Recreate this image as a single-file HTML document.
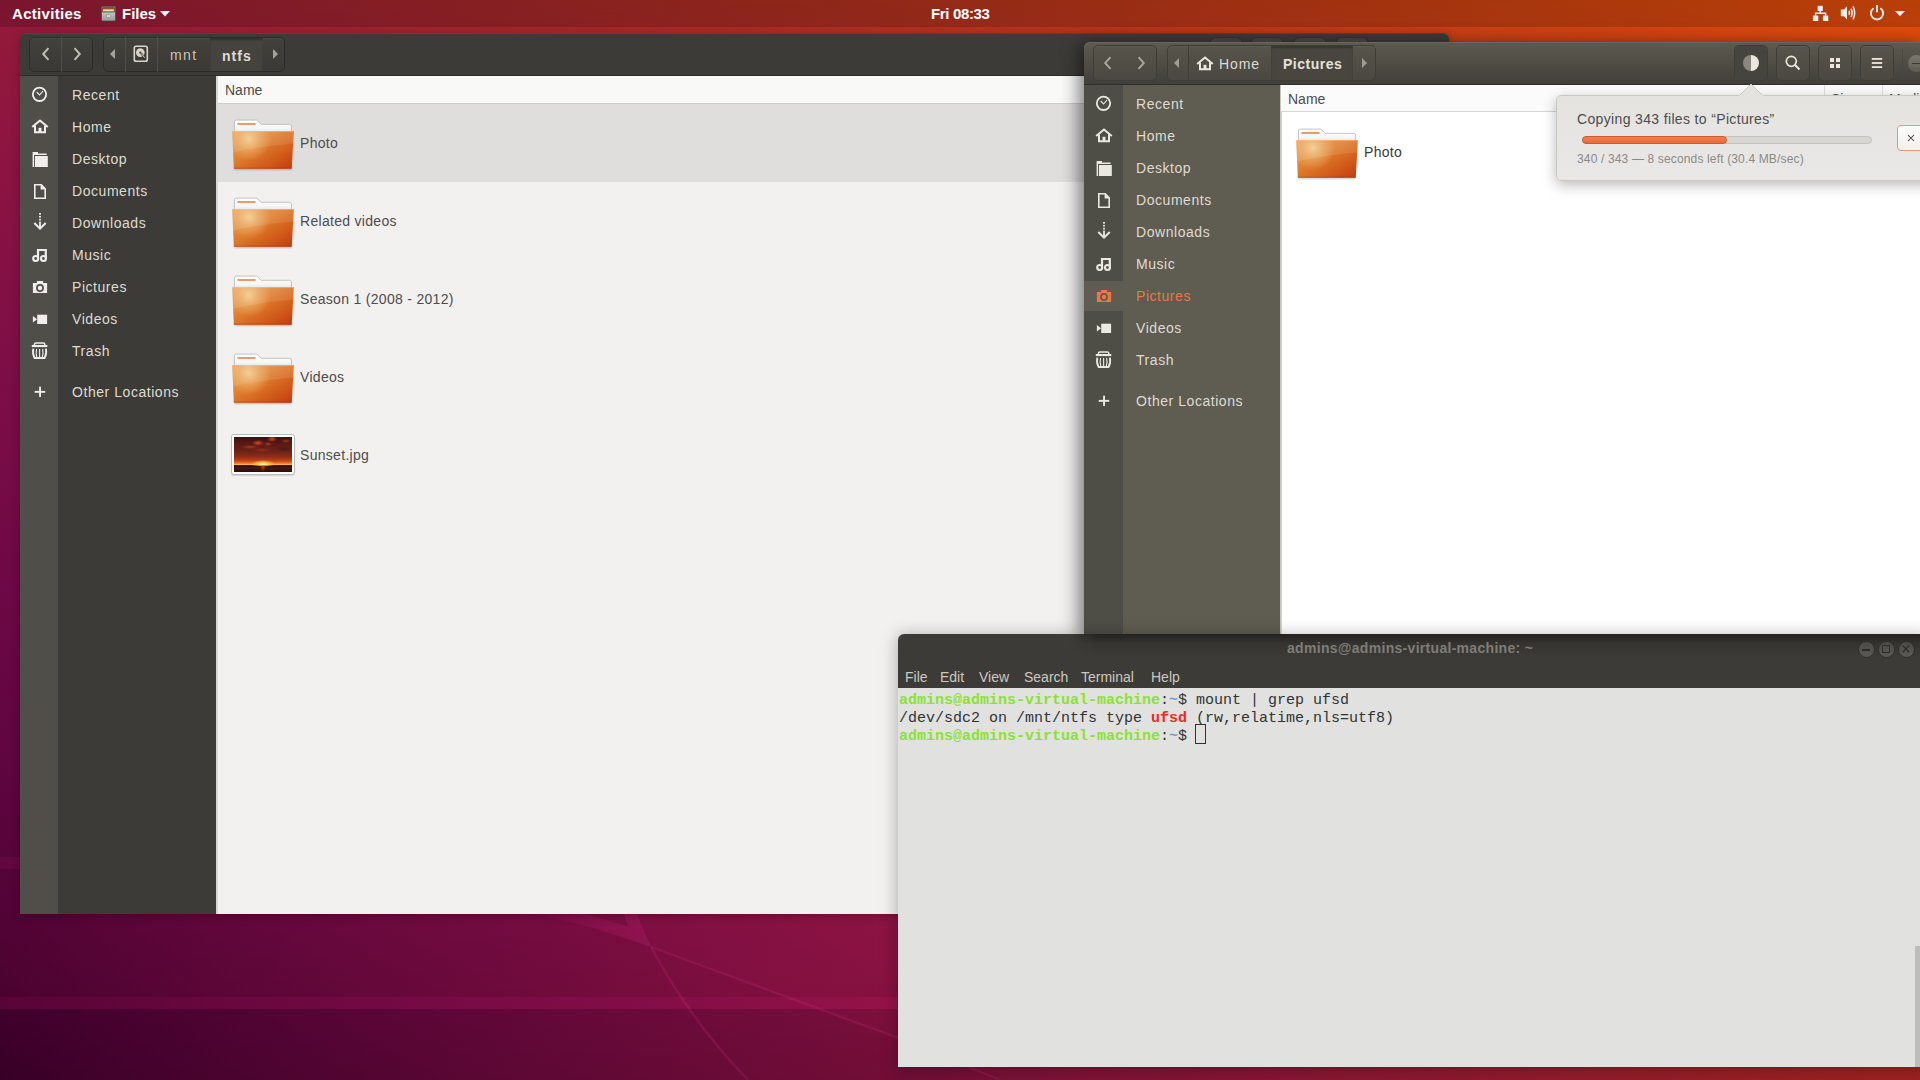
<!DOCTYPE html>
<html><head><meta charset="utf-8">
<style>
*{margin:0;padding:0;box-sizing:border-box}
html,body{width:1920px;height:1080px;overflow:hidden}
body{position:relative;font-family:"Liberation Sans",sans-serif;font-size:14px;color:#4c4c4c;background:#6a0c40}
.a{position:absolute}
.lbl{position:absolute;white-space:nowrap;line-height:17px;font-size:14px}
.btng{border:1px solid #2c2b28;border-radius:5px;background:linear-gradient(#42413c,#3a3935);box-shadow:inset 0 1px 0 rgba(255,255,255,0.05)}
.btng2{border:1px solid #3f3d37;border-radius:5px;background:linear-gradient(#57544b,#4a4841);box-shadow:inset 0 1px 0 rgba(255,255,255,0.05)}
.term{position:absolute;font-family:"Liberation Mono",monospace;font-size:15px;line-height:18px;white-space:pre;color:#2e3436}
</style></head><body>

<svg width="0" height="0" style="position:absolute"><defs>
<linearGradient id="fb" x1="0" y1="0" x2="1" y2="1"><stop offset="0" stop-color="#eca258"/><stop offset="0.4" stop-color="#e08030"/><stop offset="0.75" stop-color="#d05818"/><stop offset="1" stop-color="#c23a0e"/></linearGradient>
<radialGradient id="fh" cx="21" cy="25" r="22" gradientUnits="userSpaceOnUse"><stop offset="0" stop-color="#f3cf8f" stop-opacity="0.95"/><stop offset="0.5" stop-color="#eebb78" stop-opacity="0.5"/><stop offset="1" stop-color="#eebb78" stop-opacity="0"/></radialGradient>
<linearGradient id="fp" x1="0" y1="0" x2="0" y2="1"><stop offset="0" stop-color="#ffffff"/><stop offset="0.6" stop-color="#f6f6f6"/><stop offset="1" stop-color="#d7dde0"/></linearGradient>
<filter id="fsh" x="-20%" y="-20%" width="140%" height="140%"><feGaussianBlur stdDeviation="0.8"/></filter>
<symbol id="folder" viewBox="0 0 72 60">
 <rect x="6" y="52.5" width="58" height="3.5" rx="1.5" fill="#000" opacity="0.22" filter="url(#fsh)"/>
 <path d="M6.4 8 Q6.4 6.1 8.3 6.1 L28.8 6.1 L33.2 10.3 L61.6 10.3 Q63.5 10.3 63.5 12.2 L63.5 20 L6.4 20 Z" fill="url(#fp)" stroke="#b4b6b6" stroke-width="0.8"/>
 <rect x="9.2" y="9.1" width="18.6" height="1.8" rx="0.9" fill="#ee9a68"/>
 <path d="M4.2 17.6 Q4.2 16.9 5 16.9 L65 16.9 Q65.8 16.9 65.8 17.6 L63.8 53.9 Q63.7 54.7 62.9 54.7 L6.7 54.7 Q5.9 54.7 5.8 53.9 Z" fill="url(#fb)"/>
 <path d="M4.2 17.6 Q4.2 16.9 5 16.9 L65 16.9 Q65.8 16.9 65.8 17.6 L63.8 53.9 Q63.7 54.7 62.9 54.7 L6.7 54.7 Q5.9 54.7 5.8 53.9 Z" fill="url(#fh)"/>
 <path d="M4.3 17 L65.7 17 L65.1 29.5 Q35 32 5 38.5 Z" fill="#fff" opacity="0.10"/>
 <path d="M5 17.6 L65 17.6" stroke="#f7c296" stroke-width="0.8" opacity="0.7"/>
 <path d="M5.8 54.2 L63.8 54.2" stroke="#a8300c" stroke-width="0.8" opacity="0.6"/>
</symbol>
</defs></svg>
<div class="a" style="left:0;top:0;width:1920px;height:1080px;background:#6a0c40"></div>
<div class="a" style="left:0px;top:0px;width:1920px;height:3px;background:linear-gradient(to right,#951a39 0px,#991e33 160px,#9d222e 320px,#a22629 480px,#a72a24 640px,#ac2f20 800px,#b2331c 960px,#b93718 1120px,#bf3b14 1280px,#c73f11 1440px,#cf440e 1600px,#d7480c 1760px,#df4d09 1920px)"></div>
<div class="a" style="left:0px;top:3px;width:1920px;height:3px;background:linear-gradient(to right,#951a39 0px,#991e33 160px,#9d222e 320px,#a22629 480px,#a72a25 640px,#ac2e20 800px,#b2331c 960px,#b93718 1120px,#bf3b15 1280px,#c73f12 1440px,#cf440f 1600px,#d7480c 1760px,#df4c0a 1920px)"></div>
<div class="a" style="left:0px;top:6px;width:1920px;height:3px;background:linear-gradient(to right,#951a39 0px,#981e34 160px,#9d222e 320px,#a1262a 480px,#a72a25 640px,#ac2e20 800px,#b2321c 960px,#b93719 1120px,#c03b15 1280px,#c73f12 1440px,#cf440f 1600px,#d7480c 1760px,#df4c0a 1920px)"></div>
<div class="a" style="left:0px;top:9px;width:1920px;height:3px;background:linear-gradient(to right,#941a39 0px,#981e34 160px,#9d222f 320px,#a1262a 480px,#a72a25 640px,#ac2e21 800px,#b2321d 960px,#b93619 1120px,#c03b16 1280px,#c73f12 1440px,#cf430f 1600px,#d7480d 1760px,#df4c0b 1920px)"></div>
<div class="a" style="left:0px;top:12px;width:1920px;height:3px;background:linear-gradient(to right,#941a3a 0px,#981e34 160px,#9c222f 320px,#a1262a 480px,#a62a25 640px,#ac2e21 800px,#b2321d 960px,#b93619 1120px,#c03b16 1280px,#c73f13 1440px,#cf4310 1600px,#d7480d 1760px,#df4c0b 1920px)"></div>
<div class="a" style="left:0px;top:15px;width:1920px;height:3px;background:linear-gradient(to right,#941a3a 0px,#981e34 160px,#9c222f 320px,#a1262a 480px,#a62a26 640px,#ac2e22 800px,#b2321e 960px,#b9361a 1120px,#c03a16 1280px,#c73f13 1440px,#cf4310 1600px,#d7470e 1760px,#e04c0b 1920px)"></div>
<div class="a" style="left:0px;top:18px;width:1920px;height:3px;background:linear-gradient(to right,#94193a 0px,#981d35 160px,#9c2130 320px,#a1252b 480px,#a62a26 640px,#ac2e22 800px,#b2321e 960px,#b9361a 1120px,#c03a17 1280px,#c73f14 1440px,#cf4311 1600px,#d7470e 1760px,#e04c0c 1920px)"></div>
<div class="a" style="left:0px;top:21px;width:1920px;height:3px;background:linear-gradient(to right,#94193a 0px,#981d35 160px,#9c2130 320px,#a1252b 480px,#a62926 640px,#ac2e22 800px,#b2321e 960px,#b9361b 1120px,#c03a17 1280px,#c73e14 1440px,#cf4311 1600px,#d7470f 1760px,#e04c0c 1920px)"></div>
<div class="a" style="left:0px;top:24px;width:1920px;height:3px;background:linear-gradient(to right,#93193a 0px,#981d35 160px,#9c2130 320px,#a1252b 480px,#a62927 640px,#ac2d23 800px,#b2321f 960px,#b9361b 1120px,#c03a18 1280px,#c73e14 1440px,#cf4311 1600px,#d7470f 1760px,#e04b0d 1920px)"></div>
<div class="a" style="left:0px;top:27px;width:1920px;height:3px;background:linear-gradient(to right,#93193b 0px,#971d35 160px,#9c2130 320px,#a1252c 480px,#a62927 640px,#ac2d23 800px,#b2311f 960px,#b9361b 1120px,#c03a18 1280px,#c73e15 1440px,#cf4212 1600px,#d7470f 1760px,#e04b0d 1920px)"></div>
<div class="a" style="left:0px;top:30px;width:1920px;height:3px;background:linear-gradient(to right,#93193b 0px,#971d36 160px,#9c2131 320px,#a1252c 480px,#a62927 640px,#ac2d23 800px,#b2311f 960px,#b9351c 1120px,#c03a18 1280px,#c73e15 1440px,#cf4212 1600px,#d74710 1760px,#e04b0d 1920px)"></div>
<div class="a" style="left:0px;top:33px;width:1920px;height:3px;background:linear-gradient(to right,#93193b 0px,#971d36 160px,#9c2131 320px,#a1252c 480px,#a62928 640px,#ac2d24 800px,#b23120 960px,#b9351c 1120px,#c03a19 1280px,#c73e16 1440px,#cf4213 1600px,#d74710 1760px,#e04b0e 1920px)"></div>
<div class="a" style="left:0px;top:36px;width:1920px;height:3px;background:linear-gradient(to right,#93193b 0px,#971d36 160px,#9c2131 320px,#a1252c 480px,#a62928 640px,#ac2d24 800px,#b23120 960px,#b9351c 1120px,#c03919 1280px,#c73e16 1440px,#cf4213 1600px,#d74610 1760px,#e04b0e 1920px)"></div>
<div class="a" style="left:0px;top:39px;width:1920px;height:3px;background:linear-gradient(to right,#93193b 0px,#971d36 160px,#9b2131 320px,#a0252d 480px,#a62928 640px,#ac2d24 800px,#b23120 960px,#b9351d 1120px,#c03919 1280px,#c73e16 1440px,#cf4213 1600px,#d74611 1760px,#e04b0f 1920px)"></div>
<div class="a" style="left:0;top:42px;width:20px;height:873px;background:linear-gradient(to bottom,#93193b 0px,#91183c 24px,#90173e 48px,#8e163f 72px,#8d1540 96px,#8b1441 120px,#8a1342 144px,#881343 168px,#861244 192px,#851144 216px,#831045 240px,#811045 264px,#800f46 288px,#7e0e46 312px,#7c0d46 336px,#7b0d47 360px,#790c47 384px,#770c47 408px,#750b47 432px,#740a46 456px,#720a46 480px,#700946 504px,#6e0945 528px,#6c0845 552px,#6b0844 576px,#690744 600px,#670743 624px,#650642 648px,#630641 672px,#610640 696px,#5f053f 720px,#5d053e 744px,#5b043d 768px,#59043b 792px,#57043a 816px,#550438 840px,#530337 864px)"></div>
<div class="a" style="left:0;top:857px;width:20px;height:12px;background:rgba(255,60,150,0.07)"></div>
<div class="a" style="left:0px;top:912px;width:1920px;height:4px;background:linear-gradient(to right,#520336 0px,#5d063a 160px,#68083d 320px,#720b40 480px,#7c0e41 640px,#851142 800px,#8e1441 960px,#961740 1120px,#9e1a3d 1280px,#a51e3a 1440px,#ac2135 1600px,#b22530 1760px,#b8292a 1920px)"></div>
<div class="a" style="left:0px;top:916px;width:1920px;height:4px;background:linear-gradient(to right,#510335 0px,#5d063a 160px,#67083d 320px,#720b40 480px,#7b0e41 640px,#851141 800px,#8e1441 960px,#96173f 1120px,#9e1a3d 1280px,#a51e3a 1440px,#ac2135 1600px,#b22530 1760px,#b8292a 1920px)"></div>
<div class="a" style="left:0px;top:920px;width:1920px;height:4px;background:linear-gradient(to right,#510335 0px,#5c053a 160px,#67083d 320px,#710b3f 480px,#7b0e41 640px,#841141 800px,#8d1441 960px,#95173f 1120px,#9d1a3d 1280px,#a41e39 1440px,#ab2135 1600px,#b12530 1760px,#b72929 1920px)"></div>
<div class="a" style="left:0px;top:924px;width:1920px;height:4px;background:linear-gradient(to right,#510335 0px,#5c0539 160px,#67083d 320px,#710b3f 480px,#7b0e41 640px,#841141 800px,#8d1441 960px,#95173f 1120px,#9d1a3d 1280px,#a41e39 1440px,#ab2135 1600px,#b1252f 1760px,#b72929 1920px)"></div>
<div class="a" style="left:0px;top:928px;width:1920px;height:4px;background:linear-gradient(to right,#500335 0px,#5c0539 160px,#67083c 320px,#710b3f 480px,#7b0d40 640px,#841041 800px,#8d1440 960px,#95173f 1120px,#9d1a3c 1280px,#a41e39 1440px,#ab2135 1600px,#b1252f 1760px,#b62929 1920px)"></div>
<div class="a" style="left:0px;top:932px;width:1920px;height:4px;background:linear-gradient(to right,#500334 0px,#5b0539 160px,#66083c 320px,#710b3f 480px,#7a0d40 640px,#841041 800px,#8c1340 960px,#95173f 1120px,#9c1a3c 1280px,#a41d39 1440px,#aa2134 1600px,#b0252f 1760px,#b62929 1920px)"></div>
<div class="a" style="left:0px;top:936px;width:1920px;height:4px;background:linear-gradient(to right,#500334 0px,#5b0539 160px,#66083c 320px,#700b3e 480px,#7a0d40 640px,#831040 800px,#8c1340 960px,#94173f 1120px,#9c1a3c 1280px,#a31d39 1440px,#aa2134 1600px,#b0252f 1760px,#b62828 1920px)"></div>
<div class="a" style="left:0px;top:940px;width:1920px;height:4px;background:linear-gradient(to right,#4f0334 0px,#5b0538 160px,#66083c 320px,#700a3e 480px,#7a0d40 640px,#831040 800px,#8c1340 960px,#94163e 1120px,#9c1a3c 1280px,#a31d38 1440px,#a92134 1600px,#b0252e 1760px,#b52828 1920px)"></div>
<div class="a" style="left:0px;top:944px;width:1920px;height:4px;background:linear-gradient(to right,#4f0333 0px,#5a0538 160px,#65083c 320px,#700a3e 480px,#790d40 640px,#831040 800px,#8b1340 960px,#94163e 1120px,#9b1a3c 1280px,#a31d38 1440px,#a92134 1600px,#af242e 1760px,#b52828 1920px)"></div>
<div class="a" style="left:0px;top:948px;width:1920px;height:4px;background:linear-gradient(to right,#4f0333 0px,#5a0538 160px,#65083b 320px,#6f0a3e 480px,#790d3f 640px,#821040 800px,#8b133f 960px,#93163e 1120px,#9b1a3b 1280px,#a21d38 1440px,#a92133 1600px,#af242e 1760px,#b42827 1920px)"></div>
<div class="a" style="left:0px;top:952px;width:1920px;height:4px;background:linear-gradient(to right,#4e0333 0px,#5a0537 160px,#65083b 320px,#6f0a3e 480px,#790d3f 640px,#821040 800px,#8b133f 960px,#93163e 1120px,#9b1a3b 1280px,#a21d38 1440px,#a82133 1600px,#ae242e 1760px,#b42827 1920px)"></div>
<div class="a" style="left:0px;top:956px;width:1920px;height:4px;background:linear-gradient(to right,#4e0333 0px,#590537 160px,#64083b 320px,#6f0a3d 480px,#790d3f 640px,#821040 800px,#8b133f 960px,#93163e 1120px,#9a193b 1280px,#a11d38 1440px,#a82033 1600px,#ae242d 1760px,#b42827 1920px)"></div>
<div class="a" style="left:0px;top:960px;width:1920px;height:4px;background:linear-gradient(to right,#4e0332 0px,#590537 160px,#64083b 320px,#6e0a3d 480px,#780d3f 640px,#81103f 800px,#8a133f 960px,#92163d 1120px,#9a193b 1280px,#a11d37 1440px,#a82033 1600px,#ae242d 1760px,#b32827 1920px)"></div>
<div class="a" style="left:0px;top:964px;width:1920px;height:4px;background:linear-gradient(to right,#4d0332 0px,#590537 160px,#64083a 320px,#6e0a3d 480px,#780d3f 640px,#81103f 800px,#8a133f 960px,#92163d 1120px,#9a193b 1280px,#a11d37 1440px,#a72032 1600px,#ad242d 1760px,#b32826 1920px)"></div>
<div class="a" style="left:0px;top:968px;width:1920px;height:4px;background:linear-gradient(to right,#4d0332 0px,#580536 160px,#63073a 320px,#6e0a3d 480px,#780d3e 640px,#81103f 800px,#8a133e 960px,#92163d 1120px,#99193a 1280px,#a01d37 1440px,#a72032 1600px,#ad242d 1760px,#b22826 1920px)"></div>
<div class="a" style="left:0px;top:972px;width:1920px;height:4px;background:linear-gradient(to right,#4d0331 0px,#580536 160px,#63073a 320px,#6d0a3c 480px,#770d3e 640px,#81103f 800px,#89133e 960px,#91163d 1120px,#99193a 1280px,#a01d37 1440px,#a72032 1600px,#ad242c 1760px,#b22826 1920px)"></div>
<div class="a" style="left:0px;top:976px;width:1920px;height:4px;background:linear-gradient(to right,#4c0331 0px,#580536 160px,#630739 320px,#6d0a3c 480px,#770d3e 640px,#80103e 800px,#89133e 960px,#91163d 1120px,#99193a 1280px,#a01c36 1440px,#a62032 1600px,#ac242c 1760px,#b22725 1920px)"></div>
<div class="a" style="left:0px;top:980px;width:1920px;height:4px;background:linear-gradient(to right,#4c0331 0px,#570535 160px,#620739 320px,#6d0a3c 480px,#770d3e 640px,#80103e 800px,#89133e 960px,#91163c 1120px,#98193a 1280px,#9f1c36 1440px,#a62031 1600px,#ac242c 1760px,#b12725 1920px)"></div>
<div class="a" style="left:0px;top:984px;width:1920px;height:4px;background:linear-gradient(to right,#4c0230 0px,#570535 160px,#620739 320px,#6d0a3c 480px,#760d3d 640px,#800f3e 800px,#88123e 960px,#90163c 1120px,#98193a 1280px,#9f1c36 1440px,#a52031 1600px,#ab232b 1760px,#b12725 1920px)"></div>
<div class="a" style="left:0px;top:988px;width:1920px;height:4px;background:linear-gradient(to right,#4b0230 0px,#570535 160px,#620739 320px,#6c0a3b 480px,#760d3d 640px,#7f0f3e 800px,#88123d 960px,#90163c 1120px,#981939 1280px,#9f1c36 1440px,#a52031 1600px,#ab232b 1760px,#b02724 1920px)"></div>
<div class="a" style="left:0px;top:992px;width:1920px;height:4px;background:linear-gradient(to right,#4b0230 0px,#560535 160px,#610738 320px,#6c0a3b 480px,#760d3d 640px,#7f0f3e 800px,#88123d 960px,#90153c 1120px,#971939 1280px,#9e1c35 1440px,#a52031 1600px,#ab232b 1760px,#b02724 1920px)"></div>
<div class="a" style="left:0px;top:996px;width:1920px;height:1px;background:linear-gradient(to right,#4b022f 0px,#560534 160px,#610738 320px,#6c0a3b 480px,#760c3d 640px,#7f0f3d 800px,#88123d 960px,#90153b 1120px,#971939 1280px,#9e1c35 1440px,#a52031 1600px,#aa232b 1760px,#b02724 1920px)"></div>
<div class="a" style="left:0px;top:997px;width:1920px;height:12px;background:linear-gradient(to right,#580339 0px,#64063e 160px,#6f0842 320px,#790b45 480px,#830d46 640px,#8c1047 800px,#951347 960px,#9d1645 1120px,#a51a42 1280px,#ac1d3f 1440px,#b2203a 1600px,#b82434 1760px,#bd282d 1920px)"></div>
<div class="a" style="left:0px;top:1009px;width:1920px;height:4px;background:linear-gradient(to right,#3f002d 0px,#4a0232 160px,#550536 320px,#600739 480px,#6a0a3a 640px,#730d3b 800px,#7c103b 960px,#841339 1120px,#8b1636 1280px,#921a33 1440px,#981d2e 1600px,#9e2128 1760px,#a32421 1920px)"></div>
<div class="a" style="left:0px;top:1013px;width:1920px;height:4px;background:linear-gradient(to right,#3e002c 0px,#4a0231 160px,#550535 320px,#600738 480px,#690a3a 640px,#730d3b 800px,#7b103a 960px,#831339 1120px,#8b1636 1280px,#921932 1440px,#981d2e 1600px,#9e2128 1760px,#a32421 1920px)"></div>
<div class="a" style="left:0px;top:1017px;width:1920px;height:4px;background:linear-gradient(to right,#3e002c 0px,#4a0231 160px,#550535 320px,#5f0738 480px,#690a3a 640px,#720d3a 800px,#7b103a 960px,#831339 1120px,#8b1636 1280px,#911932 1440px,#981d2d 1600px,#9d2127 1760px,#a22420 1920px)"></div>
<div class="a" style="left:0px;top:1021px;width:1920px;height:4px;background:linear-gradient(to right,#3e002c 0px,#490231 160px,#540535 320px,#5f0738 480px,#690a3a 640px,#720d3a 800px,#7b103a 960px,#831338 1120px,#8a1636 1280px,#911932 1440px,#971d2d 1600px,#9d2027 1760px,#a22420 1920px)"></div>
<div class="a" style="left:0px;top:1025px;width:1920px;height:4px;background:linear-gradient(to right,#3d002b 0px,#490230 160px,#540534 320px,#5f0737 480px,#680a39 640px,#720d3a 800px,#7a103a 960px,#821338 1120px,#8a1635 1280px,#911932 1440px,#971d2d 1600px,#9c2027 1760px,#a12420 1920px)"></div>
<div class="a" style="left:0px;top:1029px;width:1920px;height:4px;background:linear-gradient(to right,#3d002b 0px,#490230 160px,#540534 320px,#5e0737 480px,#680a39 640px,#710d3a 800px,#7a1039 960px,#821338 1120px,#891635 1280px,#901931 1440px,#961d2c 1600px,#9c2026 1760px,#a1241f 1920px)"></div>
<div class="a" style="left:0px;top:1033px;width:1920px;height:4px;background:linear-gradient(to right,#3d002b 0px,#480230 160px,#530534 320px,#5e0737 480px,#680a39 640px,#710d39 800px,#7a0f39 960px,#821337 1120px,#891635 1280px,#901931 1440px,#961d2c 1600px,#9c2026 1760px,#a1241f 1920px)"></div>
<div class="a" style="left:0px;top:1037px;width:1920px;height:4px;background:linear-gradient(to right,#3c002a 0px,#48022f 160px,#530534 320px,#5e0737 480px,#670a38 640px,#710c39 800px,#790f39 960px,#811237 1120px,#891635 1280px,#901931 1440px,#961c2c 1600px,#9b2026 1760px,#a0241f 1920px)"></div>
<div class="a" style="left:0px;top:1041px;width:1920px;height:4px;background:linear-gradient(to right,#3c002a 0px,#48022f 160px,#530433 320px,#5d0736 480px,#670a38 640px,#700c39 800px,#790f39 960px,#811237 1120px,#881634 1280px,#8f1930 1440px,#951c2c 1600px,#9b2025 1760px,#a0241e 1920px)"></div>
<div class="a" style="left:0px;top:1045px;width:1920px;height:4px;background:linear-gradient(to right,#3b002a 0px,#47022f 160px,#520433 320px,#5d0736 480px,#670a38 640px,#700c39 800px,#790f38 960px,#811237 1120px,#881634 1280px,#8f1930 1440px,#951c2b 1600px,#9a2025 1760px,#9f241e 1920px)"></div>
<div class="a" style="left:0px;top:1049px;width:1920px;height:4px;background:linear-gradient(to right,#3b0029 0px,#47022e 160px,#520433 320px,#5d0736 480px,#660a38 640px,#700c38 800px,#780f38 960px,#801236 1120px,#881534 1280px,#8e1930 1440px,#951c2b 1600px,#9a2025 1760px,#9f241d 1920px)"></div>
<div class="a" style="left:0px;top:1053px;width:1920px;height:4px;background:linear-gradient(to right,#3b0029 0px,#47022e 160px,#520432 320px,#5c0735 480px,#660937 640px,#6f0c38 800px,#780f38 960px,#801236 1120px,#871533 1280px,#8e1930 1440px,#941c2b 1600px,#9a2024 1760px,#9e231d 1920px)"></div>
<div class="a" style="left:0px;top:1057px;width:1920px;height:4px;background:linear-gradient(to right,#3a0028 0px,#46022e 160px,#510432 320px,#5c0735 480px,#660937 640px,#6f0c38 800px,#780f37 960px,#801236 1120px,#871533 1280px,#8e192f 1440px,#941c2a 1600px,#992024 1760px,#9e231d 1920px)"></div>
<div class="a" style="left:0px;top:1061px;width:1920px;height:4px;background:linear-gradient(to right,#3a0028 0px,#46022d 160px,#510432 320px,#5c0735 480px,#660937 640px,#6f0c38 800px,#770f37 960px,#7f1236 1120px,#871533 1280px,#8d192f 1440px,#931c2a 1600px,#992024 1760px,#9d231c 1920px)"></div>
<div class="a" style="left:0px;top:1065px;width:1920px;height:4px;background:linear-gradient(to right,#3a0028 0px,#46022d 160px,#510431 320px,#5b0735 480px,#650936 640px,#6e0c37 800px,#770f37 960px,#7f1235 1120px,#861533 1280px,#8d182f 1440px,#931c2a 1600px,#981f23 1760px,#9d231c 1920px)"></div>
<div class="a" style="left:0px;top:1069px;width:1920px;height:4px;background:linear-gradient(to right,#390027 0px,#45022d 160px,#500431 320px,#5b0734 480px,#650936 640px,#6e0c37 800px,#770f37 960px,#7f1235 1120px,#861532 1280px,#8d182e 1440px,#921c29 1600px,#981f23 1760px,#9c231c 1920px)"></div>
<div class="a" style="left:0px;top:1073px;width:1920px;height:4px;background:linear-gradient(to right,#390027 0px,#45022c 160px,#500431 320px,#5b0734 480px,#650936 640px,#6e0c37 800px,#760f36 960px,#7e1235 1120px,#861532 1280px,#8c182e 1440px,#921c29 1600px,#971f23 1760px,#9c231b 1920px)"></div>
<div class="a" style="left:0px;top:1077px;width:1920px;height:3px;background:linear-gradient(to right,#390027 0px,#45022c 160px,#500430 320px,#5a0734 480px,#640936 640px,#6d0c36 800px,#760f36 960px,#7e1234 1120px,#851532 1280px,#8c182e 1440px,#921c29 1600px,#971f22 1760px,#9c231b 1920px)"></div>
<svg class="a" style="left:0;top:0" width="1920" height="1080"><defs><linearGradient id="wedge" gradientUnits="userSpaceOnUse" x1="537" y1="914" x2="651" y2="947"><stop offset="0" stop-color="#ff3aa0" stop-opacity="0.02"/><stop offset="1" stop-color="#ff3aa0" stop-opacity="0.16"/></linearGradient></defs>
<path d="M537 914 L585 914 L628 926.5 L624 914 L637 914 L651 947 Q 600 928 537 914 Z" fill="url(#wedge)"/>
<path d="M637 914 L651 947 L1000 1080 L1920 1080 L1920 914 Z" fill="rgba(255,60,120,0.03)"/>
<g fill="none" stroke="rgba(240,70,160,0.13)"><path d="M651 947 L 896 1037 L 1000 1080" stroke-width="2.2"/><path d="M651 947 Q 690 1020 748 1080" stroke-width="2.6"/></g>
</svg>
<div class="a" style="left:0;top:0;width:1920px;height:27px;background:rgba(0,0,0,0.17)"></div>
<div class="a lbl" style="left:12px;top:5px;color:#fff;font-weight:bold;font-size:15px;letter-spacing:0.3px">Activities</div>
<svg class="a" style="left:100px;top:5px" width="17" height="17" viewBox="0 0 17 17"><defs><linearGradient id="cab" x1="0" y1="0" x2="0" y2="1"><stop offset="0" stop-color="#e0e0de"/><stop offset="1" stop-color="#9a9a98"/></linearGradient></defs>
<rect x="1.5" y="1.5" width="14" height="14.5" rx="1.2" fill="url(#cab)" stroke="#3a3a3a" stroke-width="0.6"/><rect x="2.2" y="2.3" width="12.6" height="5" fill="#2a2a2a"/><rect x="2.6" y="3.4" width="11.8" height="3.6" fill="#e46a1e"/><rect x="3.2" y="4.6" width="10.6" height="1.2" fill="#fff3e0"/><rect x="6.3" y="10" width="4.4" height="2" fill="#f4f4f4" stroke="#7a7a7a" stroke-width="0.5"/></svg>
<div class="a lbl" style="left:122px;top:5px;color:#fff;font-weight:bold;font-size:15px">Files</div>
<svg class="a" style="left:159px;top:10px" width="12" height="7" viewBox="0 0 12 7"><path d="M1 1 L11 1 L6 6.5 Z" fill="#f4f4f4"/></svg>
<div class="a lbl" style="left:931px;top:5px;color:#fff;font-weight:bold;font-size:15px;letter-spacing:-0.35px">Fri 08:33</div>
<svg class="a" style="left:1812px;top:5px" width="17" height="17" viewBox="0 0 17 17"><g fill="#ededed"><rect x="5.6" y="0.8" width="5.2" height="5.2"/><rect x="0.9" y="10.6" width="5.4" height="5.4"/><rect x="10.9" y="10.6" width="5.4" height="5.4"/></g><path d="M8.2 5.5 L8.2 8.2 M3.6 11 L3.6 8.2 L13.6 8.2 L13.6 11" fill="none" stroke="#ededed" stroke-width="1.5"/></svg>
<svg class="a" style="left:1840px;top:5px" width="17" height="16" viewBox="0 0 17 16"><path d="M0.8 4.6 L3.8 4.6 L7 1.2 L7 14.6 L3.8 11.3 L0.8 11.3 Z" fill="#ededed"/><path d="M9 5.8 Q10 7.9 9 10" fill="none" stroke="#ededed" stroke-width="1.5"/><path d="M11 3.6 Q13.1 7.9 11 12.2" fill="none" stroke="#ededed" stroke-width="1.6"/><path d="M13.1 1.4 Q16.2 7.9 13.1 14.4" fill="none" stroke="#ededed" stroke-width="1.6"/></svg>
<svg class="a" style="left:1869px;top:4px" width="17" height="17" viewBox="0 0 17 17"><path d="M4.6 4.3 A6.1 6.1 0 1 0 11.4 4.3" fill="none" stroke="#ededed" stroke-width="1.9"/><rect x="7.1" y="1" width="1.8" height="7.3" fill="#ededed"/></svg>
<svg class="a" style="left:1894px;top:10px" width="12" height="7" viewBox="0 0 12 7"><path d="M1 1 L11 1 L6 6.2 Z" fill="#ededed"/></svg>

<div class="a" style="left:20px;top:33px;width:1429px;height:881px;border-radius:6px 6px 0 0;background:#3c3b37;box-shadow:0 2px 10px rgba(0,0,0,0.25), inset 0 1px 0 rgba(255,255,255,0.07)"></div>
<div class="a" style="left:20px;top:75px;width:1429px;height:1px;background:#2c2b28"></div>
<div class="a btng" style="left:29px;top:37px;width:64px;height:35px"></div>
<div class="a" style="left:61px;top:37px;width:1px;height:35px;background:#4e4d48"></div>
<svg class="a" style="left:40px;top:46px" width="12" height="16" viewBox="0 0 12 16"><path d="M8.5 2.2 L3.2 8 L8.5 13.8" fill="none" stroke="#c4c0b8" stroke-width="1.9"/></svg>
<svg class="a" style="left:71px;top:46px" width="12" height="16" viewBox="0 0 12 16"><path d="M3.5 2.2 L8.8 8 L3.5 13.8" fill="none" stroke="#c4c0b8" stroke-width="1.9"/></svg>
<div class="a btng" style="left:103px;top:37px;width:182px;height:35px"></div>
<div class="a" style="left:210px;top:38px;width:53px;height:33px;background:#45433e;box-shadow:inset 0 2px 2px rgba(0,0,0,0.25)"></div>
<div class="a" style="left:125px;top:37px;width:1px;height:35px;background:#4e4d48"></div>
<div class="a" style="left:157px;top:37px;width:1px;height:35px;background:#4e4d48"></div>
<svg class="a" style="left:109px;top:48px" width="8" height="12" viewBox="0 0 8 12"><path d="M6 1 L1 6 L6 11 Z" fill="#a5a29b"/></svg>
<svg class="a" style="left:271px;top:48px" width="8" height="12" viewBox="0 0 8 12"><path d="M2 1 L7 6 L2 11 Z" fill="#a5a29b"/></svg>
<svg class="a" style="left:133px;top:45px" width="16" height="18" viewBox="0 0 16 18"><rect x="1.3" y="1.3" width="13" height="15" rx="1.8" fill="none" stroke="#d8d4cc" stroke-width="1.6"/><circle cx="7.3" cy="7.6" r="4.3" fill="#d8d4cc"/><circle cx="7.3" cy="7.6" r="1.1" fill="#3c3b37"/><path d="M8 8.3 L11.6 12.6" stroke="#3c3b37" stroke-width="1.9"/><path d="M8.4 8.7 L11.6 12.6" stroke="#d8d4cc" stroke-width="1"/></svg>
<div class="a lbl" style="left:170px;top:47px;color:#c9c5bc;letter-spacing:1.4px">mnt</div>
<div class="a lbl" style="left:222px;top:48px;color:#dfdbd2;font-weight:bold;letter-spacing:1px">ntfs</div>
<div class="a" style="left:20px;top:76px;width:38px;height:838px;background:#4f4e48"></div>
<svg class="a" style="left:32px;top:86px;overflow:visible" width="18" height="18" viewBox="0 0 18 18"><circle cx="7.5" cy="8.3" r="6.7" fill="none" stroke="#efeeea" stroke-width="1.8"/><path d="M4.7 6 L7.5 9 L11 5.1" fill="none" stroke="#efeeea" stroke-width="1.1"/></svg>
<div class="a lbl" style="left:72px;top:87px;color:#dfdbd2;letter-spacing:0.55px">Recent</div>
<svg class="a" style="left:32px;top:118px;overflow:visible" width="18" height="18" viewBox="0 0 18 18"><path d="M0.2 9 L8 2.6 L15.8 9" fill="none" stroke="#efeeea" stroke-width="2"/><path d="M3 7.6 L3 14.2 L13 14.2 L13 7.6" fill="none" stroke="#efeeea" stroke-width="2"/><rect x="6.5" y="9.8" width="3" height="4.4" fill="#efeeea"/></svg>
<div class="a lbl" style="left:72px;top:119px;color:#dfdbd2;letter-spacing:0.55px">Home</div>
<svg class="a" style="left:32px;top:151px;overflow:visible" width="18" height="18" viewBox="0 0 18 18"><path d="M0.6 1 L6 1 L6 2.6 L14.6 2.6 L14.6 4 L2.1 4 L2.1 16 L0.6 16 Z" fill="#efeeea"/><rect x="3" y="5" width="12.8" height="11" fill="#efeeea"/></svg>
<div class="a lbl" style="left:72px;top:151px;color:#dfdbd2;letter-spacing:0.55px">Desktop</div>
<svg class="a" style="left:32px;top:183px;overflow:visible" width="18" height="18" viewBox="0 0 18 18"><path d="M2 1 L9.6 1 L14 5.4 L14 16 L2 16 Z M3.6 2.6 L3.6 14.4 L12.4 14.4 L12.4 6.4 L8.6 6.4 L8.6 2.6 Z" fill="#efeeea" fill-rule="evenodd"/></svg>
<div class="a lbl" style="left:72px;top:183px;color:#dfdbd2;letter-spacing:0.55px">Documents</div>
<svg class="a" style="left:32px;top:213px;overflow:visible" width="18" height="18" viewBox="0 0 18 18"><rect x="7.1" y="0" width="1.8" height="1.7" fill="#efeeea"/><rect x="7.1" y="2.9" width="1.8" height="1.7" fill="#efeeea"/><rect x="7.1" y="5.8" width="1.8" height="1.7" fill="#efeeea"/><rect x="7.1" y="8.6" width="1.8" height="6.4" fill="#efeeea"/><path d="M2.3 10 L8 15.7 L13.7 10" fill="none" stroke="#efeeea" stroke-width="2"/></svg>
<div class="a lbl" style="left:72px;top:215px;color:#dfdbd2;letter-spacing:0.55px">Downloads</div>
<svg class="a" style="left:32px;top:247px;overflow:visible" width="18" height="18" viewBox="0 0 18 18"><path d="M6 11.4 L6 3 L13.8 3 L13.8 11.4" fill="none" stroke="#efeeea" stroke-width="2.2"/><circle cx="3.7" cy="11.5" r="2.5" fill="none" stroke="#efeeea" stroke-width="2.1"/><circle cx="11.5" cy="11.5" r="2.5" fill="none" stroke="#efeeea" stroke-width="2.1"/></svg>
<div class="a lbl" style="left:72px;top:247px;color:#dfdbd2;letter-spacing:0.55px">Music</div>
<svg class="a" style="left:32px;top:280px;overflow:visible" width="18" height="18" viewBox="0 0 18 18"><path d="M0.9 2.9 L4.9 2.9 L4.9 0.9 L11.1 0.9 L11.1 2.9 L15.1 2.9 L15.1 13.1 L0.9 13.1 Z" fill="#efeeea"/><circle cx="8" cy="8" r="3.1" fill="none" stroke="#4f4e48" stroke-width="1.7"/></svg>
<div class="a lbl" style="left:72px;top:279px;color:#dfdbd2;letter-spacing:0.55px">Pictures</div>
<svg class="a" style="left:32px;top:313px;overflow:visible" width="18" height="18" viewBox="0 0 18 18"><path d="M0.9 3 L5 6.3 L0.9 9.6 Z" fill="#efeeea"/><rect x="5.2" y="1.7" width="9.9" height="9.3" fill="#efeeea"/></svg>
<div class="a lbl" style="left:72px;top:311px;color:#dfdbd2;letter-spacing:0.55px">Videos</div>
<svg class="a" style="left:32px;top:342px;overflow:visible" width="18" height="18" viewBox="0 0 18 18"><path d="M2.4 4 L2.4 2.6 Q2.4 1 4 1 L11.2 1 Q12.8 1 12.8 2.6 L12.8 4" fill="none" stroke="#efeeea" stroke-width="1.5"/><rect x="-0.2" y="3" width="15.5" height="2.1" fill="#efeeea"/><path d="M1.3 6.6 Q0.2 11.5 2.6 16 L12.6 16 Q15 11.5 13.9 6.6" fill="none" stroke="#efeeea" stroke-width="1.8"/><path d="M4.6 7 Q3.6 11 4.8 15 M7.6 7 L7.6 15 M10.6 7 Q11.6 11 10.4 15" fill="none" stroke="#efeeea" stroke-width="1.1"/></svg>
<div class="a lbl" style="left:72px;top:343px;color:#dfdbd2;letter-spacing:0.55px">Trash</div>
<svg class="a" style="left:32px;top:385px;overflow:visible" width="18" height="18" viewBox="0 0 18 18"><rect x="2.7" y="5.9" width="10.5" height="1.9" fill="#efeeea"/><rect x="7.1" y="1.7" width="1.9" height="10.2" fill="#efeeea"/></svg>
<div class="a lbl" style="left:72px;top:384px;color:#dfdbd2;letter-spacing:0.55px">Other Locations</div>
<div class="a" style="left:216px;top:76px;width:1233px;height:838px;background:#f2f1f0"></div>
<div class="a" style="left:216px;top:76px;width:2px;height:838px;background:#d8d7d4"></div>
<div class="a" style="left:218px;top:76px;width:1231px;height:28px;background:#f9f9f8;border-bottom:1px solid #cfcdca"></div>
<div class="a lbl" style="left:225px;top:82px;color:#4c4c4c">Name</div>
<div class="a" style="left:218px;top:104px;width:1231px;height:78px;background:#dfdedc"></div>
<svg class="a" style="left:228px;top:114px" width="72" height="60"><use href="#folder"/></svg>
<div class="a lbl" style="left:300px;top:135px;color:#4c4c4c;letter-spacing:0.3px">Photo</div>
<svg class="a" style="left:228px;top:192px" width="72" height="60"><use href="#folder"/></svg>
<div class="a lbl" style="left:300px;top:213px;color:#4c4c4c;letter-spacing:0.3px">Related videos</div>
<svg class="a" style="left:228px;top:270px" width="72" height="60"><use href="#folder"/></svg>
<div class="a lbl" style="left:300px;top:291px;color:#4c4c4c;letter-spacing:0.3px">Season 1 (2008 - 2012)</div>
<svg class="a" style="left:228px;top:348px" width="72" height="60"><use href="#folder"/></svg>
<div class="a lbl" style="left:300px;top:369px;color:#4c4c4c;letter-spacing:0.3px">Videos</div>
<div class="a lbl" style="left:300px;top:447px;color:#4c4c4c;letter-spacing:0.3px">Sunset.jpg</div>
<div class="a" style="left:231px;top:434px;width:64px;height:41px;border-radius:3px;background:#fff;border:1px solid #b9bdb9;box-shadow:0 1px 1px rgba(0,0,0,0.12)"></div>
<div class="a" style="left:234px;top:437px;width:58px;height:35px;overflow:hidden;background:linear-gradient(to bottom,#3a1014 0%,#5a1a14 20%,#6a2218 40%,#8a2c18 55%,#b83c1a 66%,#e05a22 72%,#f08a30 76%,#ffb848 79%,#ffd060 80.5%,#2a0a06 81.5%,#4a160c 88%,#2e0a06 100%)">
<div class="a" style="left:0;top:0;width:58px;height:22px;background:radial-gradient(ellipse 6px 3px at 24px 6px,rgba(240,80,40,0.85),transparent),radial-gradient(ellipse 5px 3px at 38px 2px,rgba(250,90,40,0.8),transparent),radial-gradient(ellipse 9px 2px at 16px 10px,rgba(220,70,30,0.6),transparent),radial-gradient(ellipse 4px 2px at 34px 7px,rgba(230,70,40,0.7),transparent),radial-gradient(ellipse 5px 2px at 52px 4px,rgba(220,70,40,0.6),transparent),radial-gradient(ellipse 10px 2px at 28px 13px,rgba(200,60,30,0.5),transparent),radial-gradient(ellipse 8px 3px at 50px 12px,rgba(60,20,30,0.6),transparent)"></div>
<div class="a" style="left:14px;top:20px;width:30px;height:9px;background:radial-gradient(ellipse 12px 4px at 15px 7px,#fff8b0,rgba(255,220,80,0.7) 45%,transparent)"></div>
<div class="a" style="left:24px;top:28px;width:10px;height:7px;background:radial-gradient(ellipse 3px 7px at 5px 0px,rgba(230,90,30,0.85),transparent)"></div>
</div>
<div class="a" style="left:1084px;top:44px;width:840px;height:590px;box-shadow:-2px 3px 18px 3px rgba(0,0,0,0.5);border-radius:6px 6px 0 0"></div>
<div class="a" style="left:1210px;top:37px;width:32px;height:10px;border:1px solid #2c2b28;border-radius:5px 5px 0 0;background:#3d3c38"></div>
<div class="a" style="left:1251px;top:37px;width:32px;height:10px;border:1px solid #2c2b28;border-radius:5px 5px 0 0;background:#3d3c38"></div>
<div class="a" style="left:1294px;top:37px;width:32px;height:10px;border:1px solid #2c2b28;border-radius:5px 5px 0 0;background:#3d3c38"></div>
<div class="a" style="left:1336px;top:37px;width:32px;height:10px;border:1px solid #2c2b28;border-radius:5px 5px 0 0;background:#3d3c38"></div>
<div class="a" style="left:1084px;top:42px;width:840px;height:600px;border-radius:6px 6px 0 0;background:#5f5c51;overflow:hidden"></div>
<div class="a" style="left:1084px;top:42px;width:840px;height:43px;border-radius:6px 6px 0 0;background:linear-gradient(#5d5a50,#413f3a);box-shadow:inset 0 1px 0 rgba(255,255,255,0.08), inset 0 -1px 0 #302f2b"></div>
<div class="a btng2" style="left:1093px;top:45px;width:64px;height:36px"></div>
<svg class="a" style="left:1102px;top:55px" width="12" height="16" viewBox="0 0 12 16"><path d="M8.5 2.2 L3.2 8 L8.5 13.8" fill="none" stroke="#aaa69d" stroke-width="1.9"/></svg>
<svg class="a" style="left:1135px;top:55px" width="12" height="16" viewBox="0 0 12 16"><path d="M3.5 2.2 L8.8 8 L3.5 13.8" fill="none" stroke="#aaa69d" stroke-width="1.9"/></svg>
<div class="a btng2" style="left:1167px;top:45px;width:209px;height:36px"></div>
<div class="a" style="left:1271px;top:46px;width:82px;height:34px;background:#48463f;box-shadow:inset 0 2px 2px rgba(0,0,0,0.25)"></div>
<div class="a" style="left:1188px;top:45px;width:1px;height:36px;background:#3f3d37"></div>
<svg class="a" style="left:1173px;top:57px" width="8" height="12" viewBox="0 0 8 12"><path d="M6 1 L1 6 L6 11 Z" fill="#a09c93"/></svg>
<svg class="a" style="left:1360px;top:57px" width="8" height="12" viewBox="0 0 8 12"><path d="M2 1 L7 6 L2 11 Z" fill="#a09c93"/></svg>
<svg class="a" style="left:1197px;top:55px;overflow:visible" width="18" height="18" viewBox="0 0 18 18"><path d="M0.2 9 L8 2.6 L15.8 9" fill="none" stroke="#ebe8e2" stroke-width="2"/><path d="M3 7.6 L3 14.2 L13 14.2 L13 7.6" fill="none" stroke="#ebe8e2" stroke-width="2"/><rect x="6.5" y="9.8" width="3" height="4.4" fill="#ebe8e2"/></svg>
<div class="a lbl" style="left:1219px;top:56px;color:#dfdbd2;letter-spacing:0.9px">Home</div>
<div class="a lbl" style="left:1283px;top:56px;color:#e6e2d9;font-weight:bold;letter-spacing:0.5px">Pictures</div>
<div class="a btng2" style="left:1734px;top:45px;width:34px;height:36px"></div>
<div class="a btng2" style="left:1776px;top:45px;width:34px;height:36px"></div>
<div class="a btng2" style="left:1818px;top:45px;width:34px;height:36px"></div>
<div class="a btng2" style="left:1860px;top:45px;width:34px;height:36px"></div>
<div class="a" style="left:1735px;top:46px;width:32px;height:34px;border-radius:4px;background:#46443e"></div>
<svg class="a" style="left:1742px;top:54px" width="18" height="18" viewBox="0 0 18 18"><path d="M9 1 A8 8 0 0 0 9 17 Z" fill="#8b877e"/><path d="M9 1 A8 8 0 0 1 9 17 Z" fill="#ebe7df"/></svg>
<svg class="a" style="left:1784px;top:54px" width="18" height="18" viewBox="0 0 18 18"><circle cx="7.3" cy="7.3" r="5" fill="none" stroke="#ebe7df" stroke-width="1.7"/><path d="M10.8 10.8 L15.5 15.5" stroke="#ebe7df" stroke-width="2"/></svg>
<svg class="a" style="left:1826px;top:54px" width="18" height="18" viewBox="0 0 18 18"><rect x="4" y="4" width="4" height="4" fill="#ebe7df"/><rect x="10" y="4" width="4" height="4" fill="#ebe7df"/><rect x="4" y="10" width="4" height="4" fill="#ebe7df"/><rect x="10" y="10" width="4" height="4" fill="#ebe7df"/></svg>
<svg class="a" style="left:1868px;top:54px" width="18" height="18" viewBox="0 0 18 18"><rect x="3.8" y="4" width="10.4" height="1.8" fill="#ebe7df"/><rect x="3.8" y="8.1" width="10.4" height="1.8" fill="#ebe7df"/><rect x="3.8" y="12.2" width="10.4" height="1.8" fill="#ebe7df"/></svg>
<div class="a" style="left:1902px;top:49px;width:1px;height:28px;background:#4a4842"></div>
<div class="a" style="left:1908px;top:55px;width:17px;height:17px;border-radius:50%;background:linear-gradient(#7a776f,#5e5b53)"></div>
<div class="a" style="left:1912px;top:63px;width:10px;height:1px;background:#3c3a35"></div>
<div class="a" style="left:1084px;top:85px;width:39px;height:550px;background:#4e4d46"></div>
<div class="a" style="left:1084px;top:281px;width:196px;height:30px;background:#5f5c51"></div>
<svg class="a" style="left:1096px;top:95px;overflow:visible" width="18" height="18" viewBox="0 0 18 18"><circle cx="7.5" cy="8.3" r="6.7" fill="none" stroke="#ebe8e2" stroke-width="1.8"/><path d="M4.7 6 L7.5 9 L11 5.1" fill="none" stroke="#ebe8e2" stroke-width="1.1"/></svg>
<div class="a lbl" style="left:1136px;top:96px;color:#dfdbd2;letter-spacing:0.55px">Recent</div>
<svg class="a" style="left:1096px;top:127px;overflow:visible" width="18" height="18" viewBox="0 0 18 18"><path d="M0.2 9 L8 2.6 L15.8 9" fill="none" stroke="#ebe8e2" stroke-width="2"/><path d="M3 7.6 L3 14.2 L13 14.2 L13 7.6" fill="none" stroke="#ebe8e2" stroke-width="2"/><rect x="6.5" y="9.8" width="3" height="4.4" fill="#ebe8e2"/></svg>
<div class="a lbl" style="left:1136px;top:128px;color:#dfdbd2;letter-spacing:0.55px">Home</div>
<svg class="a" style="left:1096px;top:160px;overflow:visible" width="18" height="18" viewBox="0 0 18 18"><path d="M0.6 1 L6 1 L6 2.6 L14.6 2.6 L14.6 4 L2.1 4 L2.1 16 L0.6 16 Z" fill="#ebe8e2"/><rect x="3" y="5" width="12.8" height="11" fill="#ebe8e2"/></svg>
<div class="a lbl" style="left:1136px;top:160px;color:#dfdbd2;letter-spacing:0.55px">Desktop</div>
<svg class="a" style="left:1096px;top:192px;overflow:visible" width="18" height="18" viewBox="0 0 18 18"><path d="M2 1 L9.6 1 L14 5.4 L14 16 L2 16 Z M3.6 2.6 L3.6 14.4 L12.4 14.4 L12.4 6.4 L8.6 6.4 L8.6 2.6 Z" fill="#ebe8e2" fill-rule="evenodd"/></svg>
<div class="a lbl" style="left:1136px;top:192px;color:#dfdbd2;letter-spacing:0.55px">Documents</div>
<svg class="a" style="left:1096px;top:222px;overflow:visible" width="18" height="18" viewBox="0 0 18 18"><rect x="7.1" y="0" width="1.8" height="1.7" fill="#ebe8e2"/><rect x="7.1" y="2.9" width="1.8" height="1.7" fill="#ebe8e2"/><rect x="7.1" y="5.8" width="1.8" height="1.7" fill="#ebe8e2"/><rect x="7.1" y="8.6" width="1.8" height="6.4" fill="#ebe8e2"/><path d="M2.3 10 L8 15.7 L13.7 10" fill="none" stroke="#ebe8e2" stroke-width="2"/></svg>
<div class="a lbl" style="left:1136px;top:224px;color:#dfdbd2;letter-spacing:0.55px">Downloads</div>
<svg class="a" style="left:1096px;top:256px;overflow:visible" width="18" height="18" viewBox="0 0 18 18"><path d="M6 11.4 L6 3 L13.8 3 L13.8 11.4" fill="none" stroke="#ebe8e2" stroke-width="2.2"/><circle cx="3.7" cy="11.5" r="2.5" fill="none" stroke="#ebe8e2" stroke-width="2.1"/><circle cx="11.5" cy="11.5" r="2.5" fill="none" stroke="#ebe8e2" stroke-width="2.1"/></svg>
<div class="a lbl" style="left:1136px;top:256px;color:#dfdbd2;letter-spacing:0.55px">Music</div>
<svg class="a" style="left:1096px;top:289px;overflow:visible" width="18" height="18" viewBox="0 0 18 18"><path d="M0.9 2.9 L4.9 2.9 L4.9 0.9 L11.1 0.9 L11.1 2.9 L15.1 2.9 L15.1 13.1 L0.9 13.1 Z" fill="#e8784a"/><circle cx="8" cy="8" r="3.1" fill="none" stroke="#5f5c51" stroke-width="1.7"/></svg>
<div class="a lbl" style="left:1136px;top:288px;color:#e8784a;letter-spacing:0.55px">Pictures</div>
<svg class="a" style="left:1096px;top:322px;overflow:visible" width="18" height="18" viewBox="0 0 18 18"><path d="M0.9 3 L5 6.3 L0.9 9.6 Z" fill="#ebe8e2"/><rect x="5.2" y="1.7" width="9.9" height="9.3" fill="#ebe8e2"/></svg>
<div class="a lbl" style="left:1136px;top:320px;color:#dfdbd2;letter-spacing:0.55px">Videos</div>
<svg class="a" style="left:1096px;top:351px;overflow:visible" width="18" height="18" viewBox="0 0 18 18"><path d="M2.4 4 L2.4 2.6 Q2.4 1 4 1 L11.2 1 Q12.8 1 12.8 2.6 L12.8 4" fill="none" stroke="#ebe8e2" stroke-width="1.5"/><rect x="-0.2" y="3" width="15.5" height="2.1" fill="#ebe8e2"/><path d="M1.3 6.6 Q0.2 11.5 2.6 16 L12.6 16 Q15 11.5 13.9 6.6" fill="none" stroke="#ebe8e2" stroke-width="1.8"/><path d="M4.6 7 Q3.6 11 4.8 15 M7.6 7 L7.6 15 M10.6 7 Q11.6 11 10.4 15" fill="none" stroke="#ebe8e2" stroke-width="1.1"/></svg>
<div class="a lbl" style="left:1136px;top:352px;color:#dfdbd2;letter-spacing:0.55px">Trash</div>
<svg class="a" style="left:1096px;top:394px;overflow:visible" width="18" height="18" viewBox="0 0 18 18"><rect x="2.7" y="5.9" width="10.5" height="1.9" fill="#ebe8e2"/><rect x="7.1" y="1.7" width="1.9" height="10.2" fill="#ebe8e2"/></svg>
<div class="a lbl" style="left:1136px;top:393px;color:#dfdbd2;letter-spacing:0.55px">Other Locations</div>
<div class="a" style="left:1280px;top:85px;width:644px;height:550px;background:#ffffff"></div>
<div class="a" style="left:1280px;top:85px;width:2px;height:550px;background:linear-gradient(to right,#bdbcb8,#dedddb)"></div>
<div class="a" style="left:1281px;top:85px;width:644px;height:27px;background:#fbfbfb;border-bottom:1px solid #d6d5d2"></div>
<div class="a lbl" style="left:1288px;top:91px;color:#4c4c4c">Name</div>
<div class="a" style="left:1824px;top:85px;width:1px;height:27px;background:#e2e1de"></div>
<div class="a" style="left:1882px;top:85px;width:1px;height:27px;background:#e2e1de"></div>
<div class="a lbl" style="left:1831px;top:91px;color:#4c4c4c">Size</div>
<div class="a lbl" style="left:1889px;top:91px;color:#4c4c4c">Modified</div>
<svg class="a" style="left:1292px;top:123px" width="72" height="60"><use href="#folder"/></svg>
<div class="a lbl" style="left:1364px;top:144px;color:#3a3a3a;letter-spacing:0.3px">Photo</div>
<div class="a" style="left:1556px;top:95px;width:380px;height:86px;border-radius:5px;background:linear-gradient(#e4e3e0,#e9e8e6);border:1px solid #c9c7c2;box-shadow:0 4px 14px rgba(0,0,0,0.28)"></div>
<svg class="a" style="left:1738px;top:83px" width="26" height="14" viewBox="0 0 26 14"><path d="M1 13 L13 1 L25 13" fill="#e4e3e0" stroke="#c9c7c2" stroke-width="1"/><rect x="0" y="12.5" width="26" height="2" fill="#e4e3e0"/></svg>
<div class="a lbl" style="left:1577px;top:111px;color:#4c4c4c;letter-spacing:0.35px">Copying 343 files to “Pictures”</div>
<div class="a" style="left:1582px;top:136px;width:290px;height:8px;border-radius:4px;background:#d7d6d3;border:1px solid #c4c3bf"></div>
<div class="a" style="left:1582px;top:136px;width:145px;height:8px;border-radius:4px;background:linear-gradient(#f08050,#e86c38);border:1px solid #d0582a"></div>
<div class="a lbl" style="left:1577px;top:151px;color:#8b8a86;font-size:12px;letter-spacing:0.15px">340 / 343 — 8 seconds left (30.4 MB/sec)</div>
<div class="a" style="left:1897px;top:125px;width:40px;height:26px;border-radius:4px;background:linear-gradient(#fdfdfc,#f0efed);border:1px solid #e29a78"></div>
<svg class="a" style="left:1906px;top:133px" width="10" height="10" viewBox="0 0 10 10"><path d="M2 2 L8 8 M8 2 L2 8" stroke="#3c3c3c" stroke-width="1.05"/></svg>
<div class="a" style="left:898px;top:634px;width:1030px;height:433px;box-shadow:0 2px 16px 2px rgba(0,0,0,0.25);border-radius:6px 6px 0 0"></div>
<div class="a" style="left:898px;top:634px;width:1030px;height:433px;border-radius:6px 6px 0 0;background:#e1e1df;overflow:hidden"></div>
<div class="a" style="left:898px;top:634px;width:1030px;height:54px;border-radius:6px 6px 0 0;background:#3c3b37"></div>
<div class="a" style="left:1070px;top:634px;width:860px;height:22px;background:linear-gradient(rgba(0,0,0,0.42),rgba(0,0,0,0.12) 45%,rgba(0,0,0,0));-webkit-mask-image:linear-gradient(to right,transparent,#000 28px)"></div>
<div class="a lbl" style="left:1287px;top:640px;color:#7f7d77;font-weight:bold;letter-spacing:0.3px">admins@admins-virtual-machine: ~</div>
<div class="a" style="left:1858px;top:641px;width:17px;height:17px;border-radius:50%;background:linear-gradient(#4b4a45,#5b5a55);border:1px solid #2f2e2b"></div>
<div class="a" style="left:1878px;top:641px;width:17px;height:17px;border-radius:50%;background:linear-gradient(#4b4a45,#5b5a55);border:1px solid #2f2e2b"></div>
<div class="a" style="left:1898px;top:641px;width:17px;height:17px;border-radius:50%;background:linear-gradient(#4b4a45,#5b5a55);border:1px solid #2f2e2b"></div>
<div class="a" style="left:1862px;top:649px;width:8px;height:2px;background:#2e2d2a"></div>
<div class="a" style="left:1882px;top:645px;width:8px;height:8px;border:1.5px solid #2e2d2a"></div>
<svg class="a" style="left:1901px;top:644px" width="10" height="10" viewBox="0 0 10 10"><path d="M1.8 1.8 L8.2 8.2 M8.2 1.8 L1.8 8.2" stroke="#2e2d2a" stroke-width="1.3"/></svg>
<div class="a lbl" style="left:905px;top:669px;color:#cdc9c0">File</div>
<div class="a lbl" style="left:940px;top:669px;color:#cdc9c0">Edit</div>
<div class="a lbl" style="left:979px;top:669px;color:#cdc9c0">View</div>
<div class="a lbl" style="left:1024px;top:669px;color:#cdc9c0">Search</div>
<div class="a lbl" style="left:1081px;top:669px;color:#cdc9c0">Terminal</div>
<div class="a lbl" style="left:1151px;top:669px;color:#cdc9c0">Help</div>
<div class="term" style="left:899px;top:692px"><b style="color:#8ae234">admins@admins-virtual-machine</b><span style="color:#2e3436">:</span><b style="color:#729fcf">~</b><span style="color:#2e3436">$ </span>mount | grep ufsd
/dev/sdc2 on /mnt/ntfs type <b style="color:#ef2929">ufsd</b> (rw,relatime,nls=utf8)
<b style="color:#8ae234">admins@admins-virtual-machine</b><span style="color:#2e3436">:</span><b style="color:#729fcf">~</b><span style="color:#2e3436">$ </span></div>
<div class="a" style="left:1195px;top:724px;width:11px;height:20px;border:1px solid #2e3436"></div>
<div class="a" style="left:1915px;top:946px;width:5px;height:121px;background:#bdbdbc"></div>
</body></html>
